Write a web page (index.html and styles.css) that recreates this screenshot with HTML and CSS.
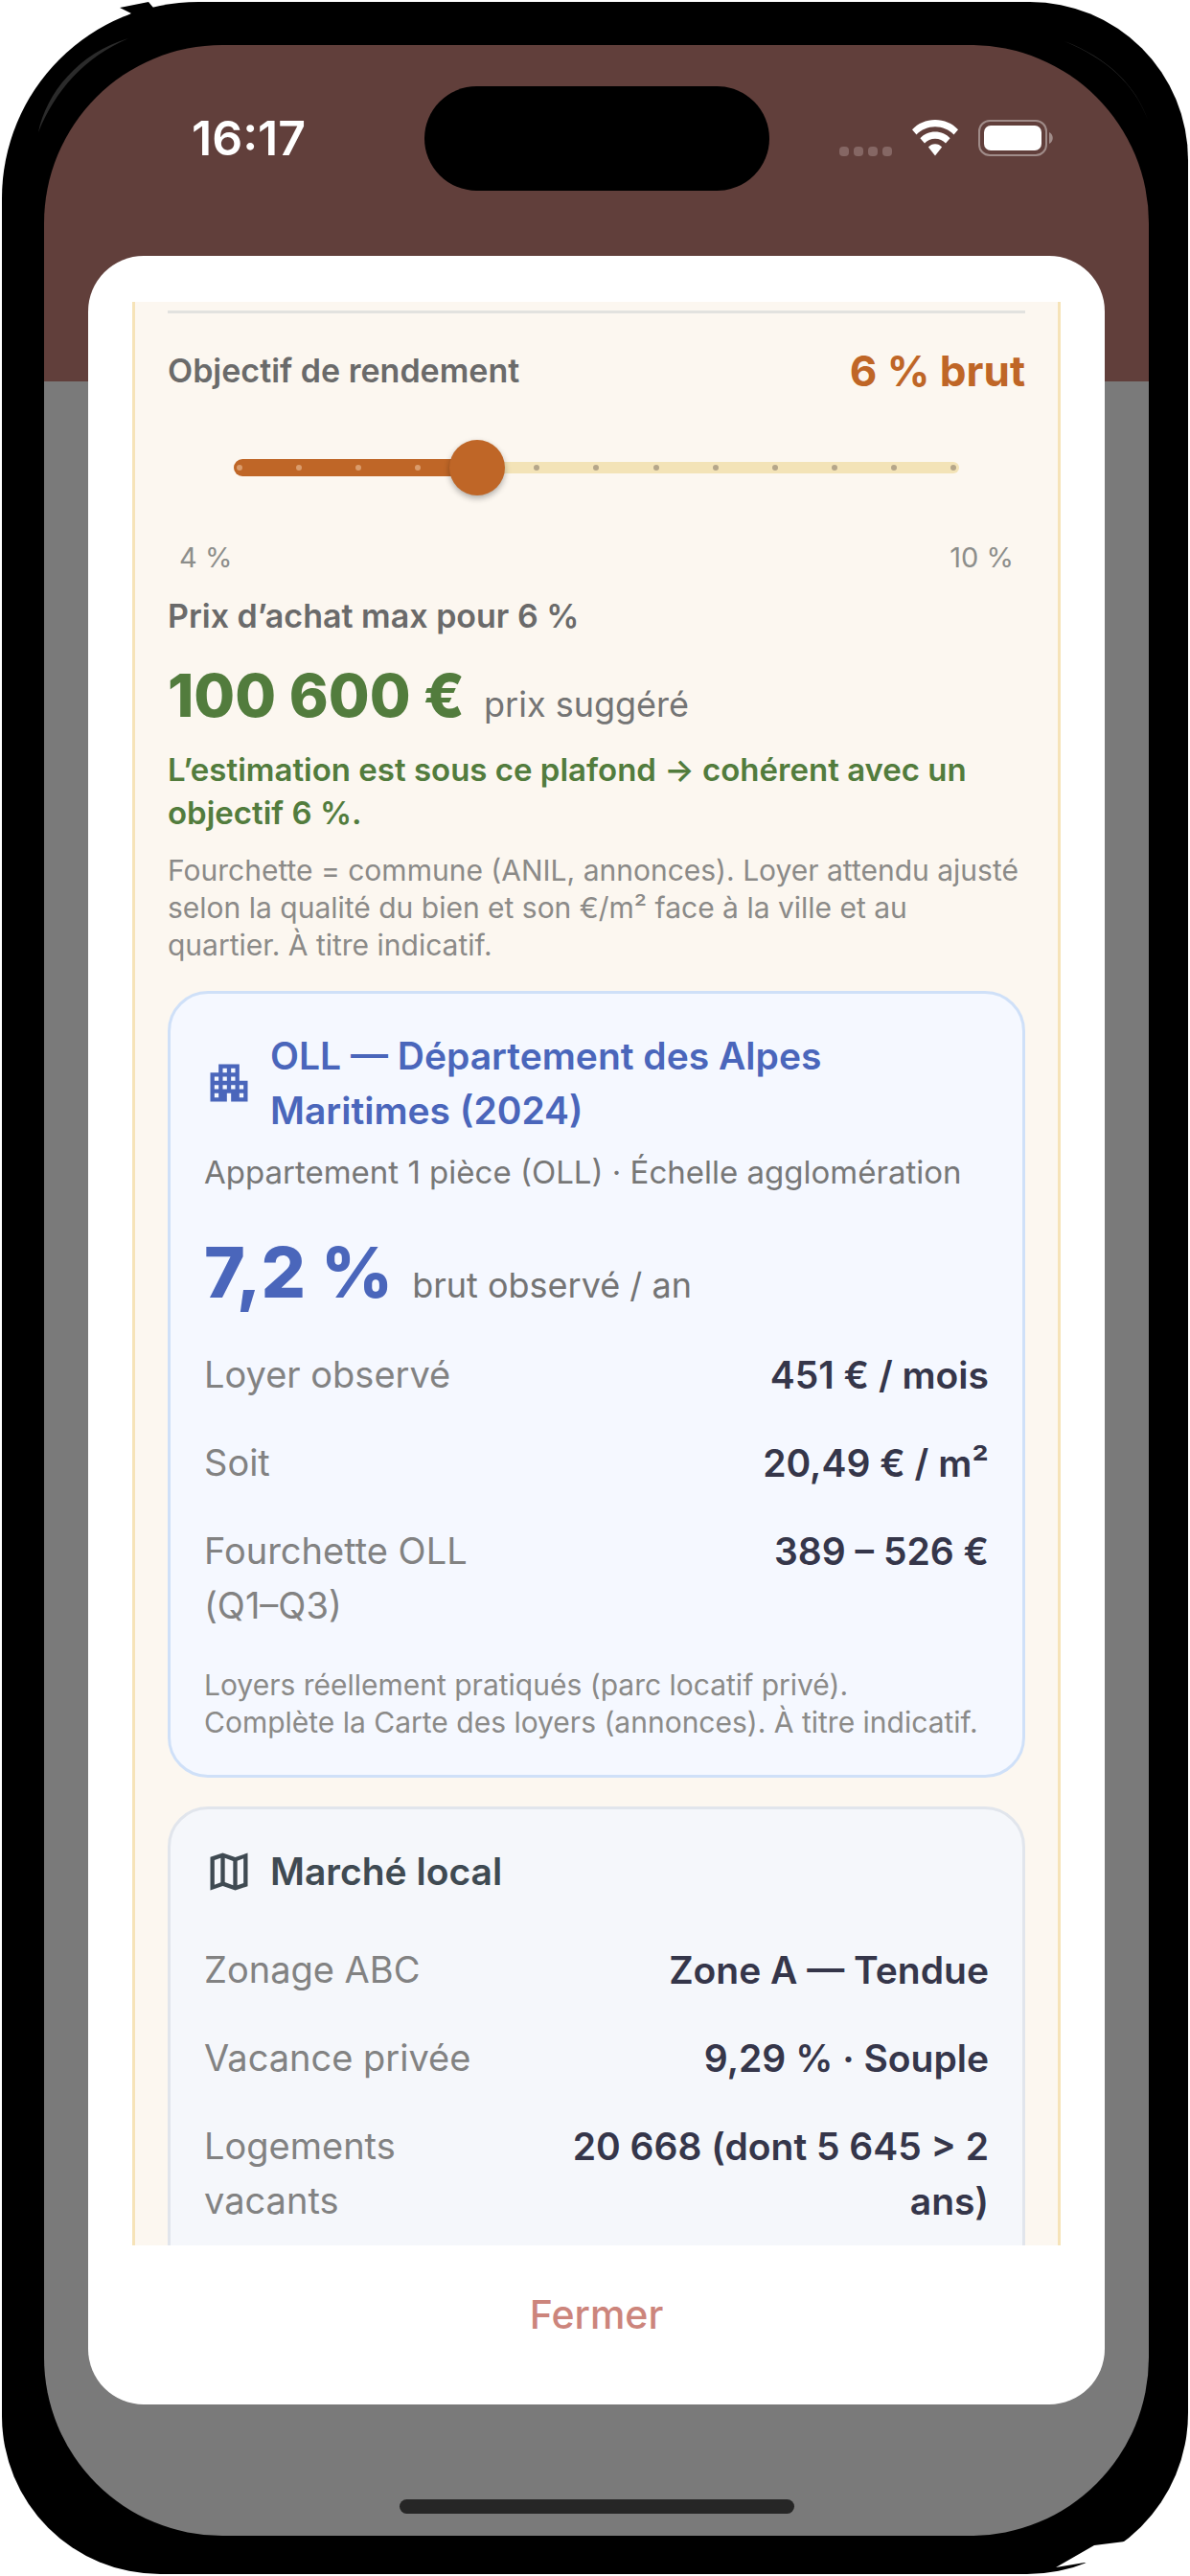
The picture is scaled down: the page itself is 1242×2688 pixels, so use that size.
FILE: index.html
```
<!DOCTYPE html>
<html lang="fr">
<head>
    <meta charset="UTF-8">
    <meta name="viewport" content="width=device-width, initial-scale=1">
    <title>Rendement locatif</title>
    <link rel="stylesheet" href="styles.css">
</head>
<body>
    <div class="phone">
        <svg class="edge edgeTop" viewBox="0 0 160 160" aria-hidden="true">
            <path d="M125 8 L155 2 L170 20 L110 30 L137 14 Z" fill="#000"/>
            <path d="M40 138 C48 98 82 55 134 40 C88 60 58 94 40 138 Z" fill="#2b2b2b"/>
        </svg>
        <svg class="edge edgeRight" viewBox="0 0 160 160" aria-hidden="true">
            <path d="M31 41 C76 58 106 88 118 123 C104 86 76 60 31 41 Z" fill="#2b2b2b"/>
        </svg>
        <svg class="edge edgeBottom" viewBox="0 0 160 160" aria-hidden="true">
            <path d="M22 153 L62 130 L94 126 L94 150 L60 152 L52 148 Z" fill="#fff"/>
        </svg>
        <div class="screen">
            <header class="statusBar">
                <time class="clock">16:17</time>
                <div class="island"></div>
                <div class="statusIcons">
                    <div class="signal"><i></i><i></i><i></i><i></i></div>
                    <svg class="wifi" viewBox="0 0 48 38" aria-hidden="true">
                        <path d="M24 0C14.600 0 6.200 3.700 0 10.200L4.500 15.500C9.600 10.300 16.400 7.300 24 7.300S38.400 10.300 43.500 15.500L48 10.200C41.800 3.700 33.400 0 24 0Z" fill="#fff"/>
                        <path d="M24 12.600C17.800 12.600 12.400 15.100 8.400 19.200L13 24.600C15.800 21.600 19.700 19.800 24 19.800S32.200 21.600 35 24.600L39.600 19.200C35.600 15.100 30.200 12.600 24 12.600Z" fill="#fff"/>
                        <path d="M24 25.200C21.200 25.200 18.700 26.300 16.900 28.600L24 37.500L31.100 28.600C29.300 26.300 26.800 25.200 24 25.200Z" fill="#fff"/>
                    </svg>
                    <svg class="battery" viewBox="0 0 80 38" aria-hidden="true">
                        <rect x="1" y="1" width="70" height="36" rx="11" fill="none" stroke="#a08c89" stroke-width="2"/>
                        <rect x="6" y="6" width="60" height="26" rx="7" fill="#fff"/>
                        <path d="M74 13C79 15 79 23 74 25Z" fill="#a08c89"/>
                    </svg>
                </div>
            </header>

            <section class="modal" role="dialog" aria-label="Rendement locatif">
                <div class="modalBody">
                    <hr class="separator">
                    <div class="goalHead">
                        <label class="label" for="goal">Objectif de rendement</label>
                        <output class="goalValue" for="goal">6 % brut</output>
                    </div>
                    <div class="slider">
                        <div class="track"></div>
                        <div class="trackActive" style="width: 33.6%"></div>
                        <div class="ticks">
                            <i class="on"></i><i class="on"></i><i class="on"></i><i class="on"></i><i></i><i></i><i></i><i></i><i></i><i></i><i></i><i></i><i></i>
                        </div>
                        <input class="range" id="goal" type="range" min="4" max="10" step="0.5" value="6">
                    </div>
                    <div class="bounds">
                        <span>4 %</span>
                        <span>10 %</span>
                    </div>

                    <p class="label">Prix d’achat max pour 6 %</p>
                    <p class="priceRow">
                        <strong class="price">100 600 €</strong>
                        <span class="unit">prix suggéré</span>
                    </p>
                    <p class="verdict">L’estimation est sous ce plafond → cohérent avec un objectif 6 %.</p>
                    <p class="note">Fourchette = commune (ANIL, annonces). Loyer attendu ajusté selon la qualité du bien et son €/m² face à la ville et au<br>quartier. À titre indicatif.</p>

                    <article class="card cardOll">
                        <h2 class="cardTitle">
                            <svg class="icon" viewBox="0 0 24 24" aria-hidden="true"><path d="M17 11V3H7v4H3v14h8v-4h2v4h8V11h-4zM7 19H5v-2h2v2zm0-4H5v-2h2v2zm0-4H5V9h2v2zm4 4H9v-2h2v2zm0-4H9V9h2v2zm0-4H9V5h2v2zm4 8h-2v-2h2v2zm0-4h-2V9h2v2zm0-4h-2V5h2v2zm4 12h-2v-2h2v2zm0-4h-2v-2h2v2z"/></svg>
                            <span>OLL — Département des Alpes Maritimes (2024)</span>
                        </h2>
                        <p class="subtitle">Appartement 1 pièce (OLL) · Échelle agglomération</p>
                        <p class="yieldRow">
                            <strong class="yield">7,2 %</strong>
                            <span class="unit">brut observé / an</span>
                        </p>
                        <dl class="rows">
                            <div class="row"><dt>Loyer observé</dt><dd>451 € / mois</dd></div>
                            <div class="row"><dt>Soit</dt><dd>20,49 € / m²</dd></div>
                            <div class="row"><dt>Fourchette OLL (Q1–Q3)</dt><dd>389 – 526 €</dd></div>
                        </dl>
                        <p class="cardNote">Loyers réellement pratiqués (parc locatif privé).<br>Complète la Carte des loyers (annonces). À titre indicatif.</p>
                    </article>

                    <article class="card cardMarket">
                        <h2 class="cardTitle">
                            <svg class="icon" viewBox="0 0 24 24" aria-hidden="true"><path d="M21 3l-6 2.100L9 3 3 5v16l6-2.100 6 2.100 6-2V3zM10 5.470l4 1.400v11.660l-4-1.400V5.470zm-5 .99l3-1.010v11.700l-3 1.160V6.460zm14 11.080l-3 1.010V6.860l3-1.160v11.840z"/></svg>
                            <span>Marché local</span>
                        </h2>
                        <dl class="rows">
                            <div class="row"><dt>Zonage ABC</dt><dd>Zone A — Tendue</dd></div>
                            <div class="row"><dt>Vacance privée</dt><dd>9,29 % · Souple</dd></div>
                            <div class="row"><dt>Logements vacants</dt><dd>20 668 (dont 5 645 &gt; 2 ans)</dd></div>
                        </dl>
                    </article>
                </div>
                <footer class="actions">
                    <button class="closeBtn" type="button">Fermer</button>
                </footer>
            </section>

            <div class="homeBar"></div>
        </div>
    </div>
</body>
</html>
```

FILE: styles.css
```
* {
    box-sizing: border-box;
}
body {
    margin: 0;
    padding: 2px;
    height: 100vh;
    background: #fff;
    font-family: Inter, "Liberation Sans", sans-serif;
}
p, h2, dl, dt, dd {
    margin: 0;
}

/* phone */
.phone {
    position: relative;
    height: 100%;
    padding: 45px 41px 40px 44px;
    background: #000;
    border-radius: 205px 165px 168px 165px;
}
.edge {
    position: absolute;
    width: 160px;
    height: 160px;
}
.edgeTop {
    top: -2px;
    left: -2px;
}
.edgeRight {
    top: 0;
    right: 0;
}
.edgeBottom {
    right: 0;
    bottom: 0;
}
.screen {
    display: flex;
    flex-direction: column;
    height: 100%;
    padding: 0 46px;
    border-radius: 186px;
    background: linear-gradient(#613f3b 351px, #7a7a7a 351px);
}

/* status bar */
.statusBar {
    display: grid;
    grid-template-columns: 1fr 360px 1fr;
    align-items: center;
    height: 220px;
    padding-bottom: 26px;
}
.clock {
    padding-left: 108px;
    color: #fff;
    font-size: 50px;
    font-weight: 600;
    line-height: 60px;
}
.island {
    height: 109px;
    border-radius: 55px;
    background: #000;
}
.statusIcons {
    display: flex;
    justify-content: flex-end;
    align-items: center;
    gap: 21px;
    padding-right: 52px;
}
.signal {
    display: flex;
    gap: 5px;
    padding-top: 28px;
}
.signal i {
    width: 10px;
    height: 10px;
    border-radius: 4px;
    background: #856764;
}
.wifi {
    width: 48px;
    height: 38px;
}
.battery {
    width: 80px;
    height: 38px;
}

/* modal */
.modal {
    display: flex;
    flex-direction: column;
    flex: 1;
    min-height: 0;
    padding: 48px 46px 0;
    border-radius: 58px;
    background: #fff;
}
.modalBody {
    flex: 1;
    min-height: 0;
    overflow: hidden;
    padding: 9px 34px 0;
    border: solid #f6e3b8;
    border-width: 0 3px;
    background: #fcf7f0;
}
.actions {
    display: flex;
    justify-content: center;
    align-items: center;
    height: 166px;
    padding-bottom: 22px;
}
.closeBtn {
    border: 0;
    background: none;
    color: #cc857c;
    font-family: inherit;
    font-size: 41px;
    font-weight: 500;
    line-height: 57px;
}
.homeBar {
    flex: none;
    width: 412px;
    height: 15px;
    margin: 99px auto 23px;
    border-radius: 8px;
    background: #262626;
}

/* yield target */
.separator {
    height: 3px;
    margin: 0 0 30px;
    border: 0;
    background: #e2e2df;
}
.goalHead {
    display: flex;
    justify-content: space-between;
    align-items: center;
    height: 60px;
}
.label {
    color: #6a6a6a;
    font-size: 34px;
    font-weight: 600;
    line-height: 44px;
}
.goalValue {
    color: #bf6627;
    font-size: 44px;
    font-weight: 700;
}
.slider {
    display: grid;
    align-items: center;
    height: 60px;
    margin: 41px 69px 44px;
}
.slider > * {
    grid-area: 1 / 1;
}
.track {
    height: 12px;
    border-radius: 6px;
    background: #f3e3b7;
}
.trackActive {
    height: 18px;
    border-radius: 9px;
    background: #bf6627;
}
.ticks {
    display: flex;
    justify-content: space-between;
    padding: 0 3px;
}
.ticks i {
    width: 6px;
    height: 6px;
    border-radius: 3px;
    background: #b5a68a;
}
.ticks .on {
    background: #da9c6c;
}
.range {
    -webkit-appearance: none;
    appearance: none;
    height: 58px;
    margin: 0 -23px;
    background: none;
}
.range::-webkit-slider-thumb {
    -webkit-appearance: none;
    width: 58px;
    height: 58px;
    border-radius: 50%;
    background: #bf6627;
    box-shadow: 0 3px 6px rgba(0, 0, 0, 0.3);
}
.bounds {
    display: flex;
    justify-content: space-between;
    margin-bottom: 19px;
    padding: 0 12px;
    color: #8d8e8b;
    font-size: 29px;
    line-height: 40px;
}

/* suggested price */
.priceRow {
    display: flex;
    align-items: baseline;
    gap: 20px;
    height: 70px;
    margin: 26px 0 20px;
    line-height: 70px;
}
.price {
    color: #527c3d;
    font-size: 62px;
    font-weight: 800;
}
.unit {
    color: #747474;
    font-size: 36px;
}
.verdict {
    color: #527c3d;
    font-size: 33px;
    font-weight: 600;
    line-height: 45px;
}
.note,
.cardNote {
    color: #8b8a88;
    font-size: 30px;
    line-height: 39px;
}
.note {
    margin-top: 18px;
}

/* cards */
.card {
    margin-top: 28px;
    padding: 36px 35px 35px;
    border: 3px solid;
    border-radius: 42px;
}
.cardOll {
    border-color: #cfe0f8;
    background: #f5f8ff;
}
.cardMarket {
    margin-top: 30px;
    padding-bottom: 80px;
    border-color: #e1e5ec;
    background: #f5f7fb;
}
.cardTitle {
    display: flex;
    align-items: center;
    gap: 17px;
    font-size: 39px;
    font-weight: 600;
    line-height: 57px;
}
.cardOll .cardTitle {
    color: #4a66bb;
}
.cardMarket .cardTitle {
    margin-bottom: 46px;
    color: #3f4a52;
}
.icon {
    flex: none;
    width: 52px;
    height: 52px;
    fill: currentColor;
}
.subtitle {
    margin-top: 14px;
    color: #777;
    font-size: 33px;
    line-height: 44px;
}
.yieldRow {
    display: flex;
    align-items: baseline;
    gap: 20px;
    height: 84px;
    margin: 41px 0 36px;
    line-height: 84px;
}
.yield {
    color: #4a66bb;
    font-size: 73px;
    font-weight: 800;
}
.rows {
    display: grid;
    gap: 35px;
}
.row {
    display: grid;
    grid-template-columns: 2fr 3fr;
    gap: 24px;
    font-size: 38px;
    line-height: 57px;
}
.row dt {
    color: #828282;
}
.row dd {
    color: #35364a;
    font-size: 39px;
    font-weight: 600;
    text-align: right;
}
.cardNote {
    margin-top: 35px;
}
```
